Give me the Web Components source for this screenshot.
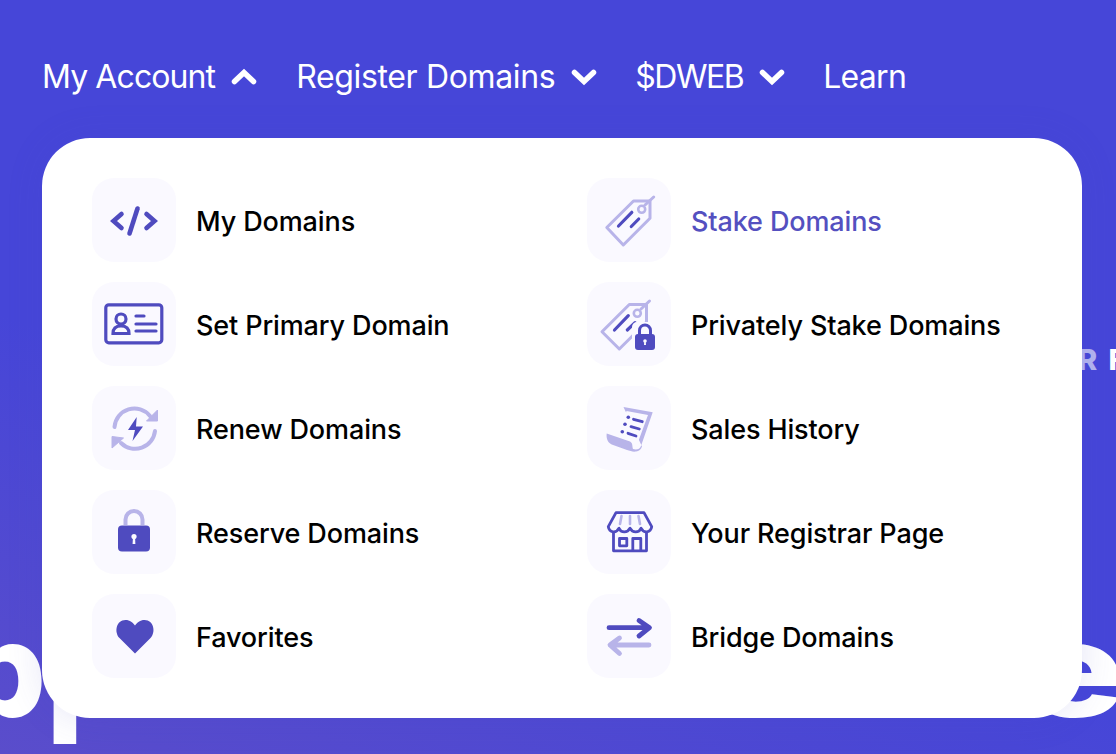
<!DOCTYPE html>
<html lang="en">
<head>
<meta charset="utf-8">
<title>Menu</title>
<style>
    html, body { margin: 0; height: 100%; }
    body { overflow: hidden; }
</style>
</head>
<body>
<app-page></app-page>

<script>
const icon_paths = {
    code: `<g fill="none" stroke="#4f4bbf" stroke-width="4.6" stroke-linecap="round" stroke-linejoin="miter">
        <polyline points="29.5,36 21.5,43 29.5,50"/><polyline points="54.5,36 62.5,43 54.5,50"/><line x1="45.5" y1="30.5" x2="37.5" y2="55.5"/></g>`,
    card: `<g fill="none" stroke="#4f4bbf" stroke-width="3.2" stroke-linecap="round">
        <rect x="13.8" y="22.8" width="56" height="38" rx="3"/><circle cx="29" cy="37" r="5"/>
        <path d="M21 51.500c0-5 3-7.500 8-7.500s8 2.500 8 7.500z"/><path d="M44 34h8M44 42h20M44 49h20"/></g>`,
    renew: `<g fill="none" stroke="#b8b4e9" stroke-width="4" stroke-linecap="round">
        <path d="M22.500 41A20 20 0 0 1 58 30"/><path d="M63 45A20 20 0 0 1 29 57"/></g>
        <path d="M65.500 24v11H54.500zM20 50.500v11.500L31.500 52z" fill="#b8b4e9" stroke="#b8b4e9" stroke-linejoin="round"/>
        <path d="M44.700 31 36 44h7l-2.500 11 10.500-14.500h-7z" fill="#4f4bbf"/>`,
    lock: `<path d="M33.500 35v-5.500a8.500 8.500 0 0 1 17 0V35" fill="none" stroke="#b8b4e9" stroke-width="4"/>
        <rect x="26" y="35.500" width="32" height="26" rx="4" fill="#4f4bbf"/>
        <circle cx="42" cy="46.500" r="2.600" fill="#faf9ff"/><path d="M41 47h2l.4 7h-2.800z" fill="#faf9ff"/>`,
    heart: `<path d="M43 59.500 27.500 44C22 38.500 24 26 33.500 26 38 26 41 28.500 43 31.500 45 28.500 48 26 52.500 26 62 26 64 38.500 58.500 44z" fill="#4f4bbf"/>`,
    tag: `<path d="M46.500 23H63v17.300L36.300 67 19.800 49.500z" fill="none" stroke="#b8b4e9" stroke-width="3" stroke-linejoin="round"/>
        <circle cx="54.700" cy="31.300" r="3.500" fill="none" stroke="#b8b4e9" stroke-width="2.600"/>
        <path d="M58 27l8.700-8" stroke="#b8b4e9" stroke-width="3" stroke-linecap="round"/>
        <path d="M31.500 48l13.300-13.700M44.300 48.500l7.400-7.500" stroke="#4f4bbf" stroke-width="3.200" stroke-linecap="round"/>`,
    tag_lock: `<path d="M42.300 22.500H59.500V40L32.300 67 15 49.700z" fill="none" stroke="#b8b4e9" stroke-width="3" stroke-linejoin="round"/>
        <circle cx="50.300" cy="31.300" r="3.500" fill="none" stroke="#b8b4e9" stroke-width="2.600"/>
        <path d="M54 27l8.500-8" stroke="#b8b4e9" stroke-width="3" stroke-linecap="round"/>
        <path d="M27.500 48l13.800-14.300M40.300 48l7.700-7.300" stroke="#4f4bbf" stroke-width="3.200" stroke-linecap="round"/>
        <rect x="45" y="40" width="26" height="31" rx="5" fill="#faf9ff"/>
        <path d="M52.500 53v-4.500a5.500 5.500 0 0 1 11 0V53" fill="none" stroke="#4f4bbf" stroke-width="3"/>
        <rect x="48" y="52" width="20" height="16" rx="3" fill="#4f4bbf"/>
        <circle cx="58" cy="59" r="1.800" fill="#faf9ff"/><path d="M57.300 59h1.400l.3 4h-2z" fill="#faf9ff"/>`,
    receipt: `<path d="M36.500 21 65.700 26.300 54 60c-1 3.500-5 4-8 3-1-3 0-6-3-7.500L19.700 47.500c-.5 4 .5 9 5 11L40 64c3 1 6 2 9 1.500 3-.5 5-2 6-5z" fill="#b8b4e9"/>
        <path d="M39.500 25 61 29 50.500 57.500c-.8 1.500-1.800 1.800-2.500 1.500-.5-3-1-5.500-4-7L32.500 47.500z" fill="#faf9ff"/>
        <g fill="#4f4bbf"><circle cx="41.300" cy="31.300" r="1.800"/><circle cx="38" cy="38.300" r="1.800"/><circle cx="35.300" cy="45.700" r="1.800"/></g>
        <path d="M46.500 33.300l8.800 2.400M44 40.700l8.300 2.300M41 47.300l8 2.700" stroke="#4f4bbf" stroke-width="2.800" stroke-linecap="round"/>`,
    store: `<path d="M34.500 26l-1.500 8M43 26v8M51.500 26l1.500 8" stroke="#b8b4e9" stroke-width="2.600" stroke-linecap="round"/>
        <g fill="none" stroke="#4f4bbf" stroke-width="2.800" stroke-linejoin="round">
        <path d="M29 22.700H57L64.700 36.700c-1 6-8 7-10.700 1.500-2 5-8.500 5-11 0-2.500 5-9 5-11 0C29.300 43.700 22.300 42.700 21.300 36.700z"/>
        <path d="M26.500 42V60.800H59.500V42"/><rect x="32.500" y="48.500" width="7.300" height="7.300"/><path d="M45.800 60.800V48.500H53.800V60.800"/></g>`,
    bridge: `<g fill="none" stroke-width="4.800" stroke-linecap="round" stroke-linejoin="round">
        <g stroke="#4f4bbf"><path d="M22 33.700H62M52 26.500l10.500 7.200L52 42"/></g>
        <g stroke="#b8b4e9"><path d="M62 51H23.500M32.500 44l-9.500 7 9.500 8.500"/></g></g>`
};

const template_menu_icon = document.createElement('template');
template_menu_icon.innerHTML = `
    <style>
        :host {
            display: block;
            width: 84px;
            height: 84px;
            flex: none;
            border-radius: 22px;
            background: #faf9ff;
        }
        svg { display: block; width: 84px; height: 84px; }
    </style>
    <svg viewBox="0 0 84 84"></svg>
`;

class MenuIcon extends HTMLElement {
    static get observedAttributes() {
        return ['name'];
    }

    constructor() {
        super();
        this.attachShadow({ mode: 'open' });
        this.shadowRoot.appendChild(template_menu_icon.content.cloneNode(true));
    }

    attributeChangedCallback(attr, antes, valor) {
        this.shadowRoot.querySelector('svg').innerHTML = icon_paths[valor] || '';
    }
}
customElements.define('menu-icon', MenuIcon);

const template_menu_item = document.createElement('template');
template_menu_item.innerHTML = `
    <style>
        :host {
            display: flex;
            align-items: center;
            gap: 20px;
            height: 84px;
            color: #000;
            font: 450 27px/36px Inter, sans-serif;
            letter-spacing: -0.12px;
            white-space: nowrap;
        }
        :host([active]) { color: #5450c0; }
        span { padding-top: 4px; }
    </style>
    <menu-icon></menu-icon>
    <span><slot></slot></span>
`;

class MenuItem extends HTMLElement {
    constructor() {
        super();
        this.attachShadow({ mode: 'open' });
        this.shadowRoot.appendChild(template_menu_item.content.cloneNode(true));
    }

    connectedCallback() {
        this.shadowRoot.querySelector('menu-icon').setAttribute('name', this.getAttribute('icon'));
    }
}
customElements.define('menu-item', MenuItem);

const template_nav_link = document.createElement('template');
template_nav_link.innerHTML = `
    <style>
        :host {
            display: flex;
            align-items: center;
            gap: 16px;
            color: #fff;
            font: 400 32px/40px Inter, sans-serif;
            letter-spacing: -0.7px;
            white-space: nowrap;
        }
        svg { display: block; width: 26px; height: 18px; }
        :host(:not([arrow])) svg { display: none; }
        :host([arrow="up"]) svg { transform: rotate(180deg); }
    </style>
    <slot></slot>
    <svg viewBox="0 0 26 18"><polyline points="3.500,4.500 13,13.500 22.500,4.500" fill="none" stroke="#fff" stroke-width="5.500" stroke-linecap="round" stroke-linejoin="miter"/></svg>
`;

class NavLink extends HTMLElement {
    constructor() {
        super();
        this.attachShadow({ mode: 'open' });
        this.shadowRoot.appendChild(template_nav_link.content.cloneNode(true));
    }
}
customElements.define('nav-link', NavLink);

const template_dropdown_panel = document.createElement('template');
template_dropdown_panel.innerHTML = `
    <style>
        :host {
            display: grid;
            grid-template-columns: 495px 1fr;
            grid-auto-flow: column;
            grid-template-rows: repeat(5, 84px);
            row-gap: 20px;
            box-sizing: border-box;
            width: 1040px;
            padding: 40px 50px;
            border-radius: 48px;
            background: #fff;
            box-shadow: 0 0 36px rgba(70, 70, 200, .14);
        }
    </style>
    <slot></slot>
`;

class DropdownPanel extends HTMLElement {
    constructor() {
        super();
        this.attachShadow({ mode: 'open' });
        this.shadowRoot.appendChild(template_dropdown_panel.content.cloneNode(true));
    }
}
customElements.define('dropdown-panel', DropdownPanel);

const template_app_page = document.createElement('template');
template_app_page.innerHTML = `
    <style>
        :host {
            display: block;
            position: relative;
            width: 1116px;
            height: 754px;
            overflow: hidden;
            background: linear-gradient(200deg, #4646d8 0%, #4646d8 62%, #5a4dcb 100%);
        }
        nav {
            display: flex;
            align-items: center;
            gap: 39px;
            height: 40px;
            padding: 57px 0 41px 42px;
        }
        dropdown-panel {
            position: relative;
            margin-left: 42px;
        }
        .kicker {
            position: absolute;
            left: 1078px;
            top: 345px;
            color: #fff;
            font: 800 29px/30px Inter, sans-serif;
            letter-spacing: 5px;
            word-spacing: -5px;
            white-space: nowrap;
        }
        .kicker span { opacity: .6; }
        .headline {
            position: absolute;
            top: 594px;
            color: #fff;
            font: 800 132px/150px Inter, sans-serif;
            white-space: nowrap;
        }
        .headline.left { left: -38px; }
        .headline.right { left: 1022px; transform: scaleX(1.3); transform-origin: left; }
    </style>
    <div class="kicker"><span>R</span> F</div>
    <div class="headline left">pp</div>
    <div class="headline right">e</div>
    <nav>
        <nav-link arrow="up" style="letter-spacing:-.9px">My Account</nav-link>
        <nav-link arrow="down" style="letter-spacing:-.35px">Register Domains</nav-link>
        <nav-link arrow="down" style="letter-spacing:-1.5px; margin-left:-1px; margin-right:-1px">$DWEB</nav-link>
        <nav-link>Learn</nav-link>
    </nav>
    <dropdown-panel>
        <menu-item icon="code">My Domains</menu-item>
        <menu-item icon="card">Set Primary Domain</menu-item>
        <menu-item icon="renew">Renew Domains</menu-item>
        <menu-item icon="lock">Reserve Domains</menu-item>
        <menu-item icon="heart">Favorites</menu-item>
        <menu-item icon="tag" active>Stake Domains</menu-item>
        <menu-item icon="tag_lock">Privately Stake Domains</menu-item>
        <menu-item icon="receipt">Sales History</menu-item>
        <menu-item icon="store">Your Registrar Page</menu-item>
        <menu-item icon="bridge">Bridge Domains</menu-item>
    </dropdown-panel>
`;

class AppPage extends HTMLElement {
    constructor() {
        super();
        this.attachShadow({ mode: 'open' });
        this.shadowRoot.appendChild(template_app_page.content.cloneNode(true));
    }
}
customElements.define('app-page', AppPage);
</script>
</body>
</html>
